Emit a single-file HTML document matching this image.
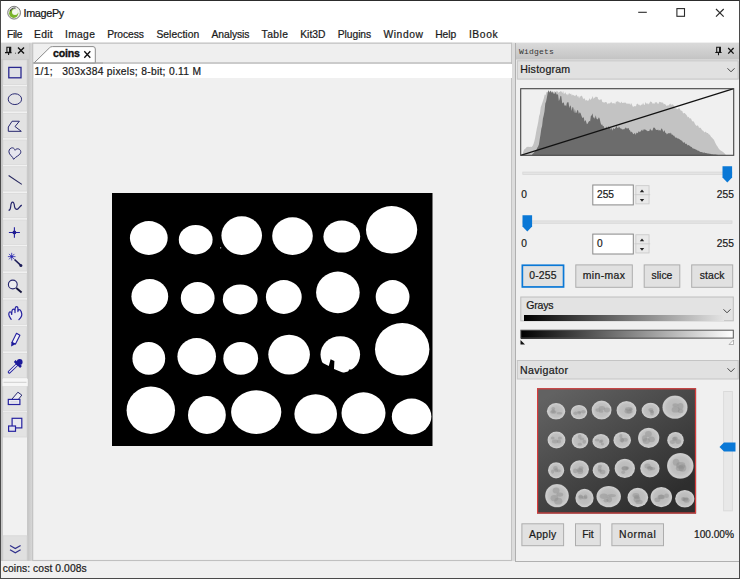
<!DOCTYPE html>
<html><head><meta charset="utf-8"><title>ImagePy</title>
<style>
html,body{margin:0;padding:0;}
body{width:740px;height:579px;position:relative;overflow:hidden;background:#f0f0f0;font-family:"Liberation Sans",sans-serif;font-size:10.3px;color:#1a1a1a;}
.abs{position:absolute;}
.t{position:absolute;white-space:nowrap;line-height:12px;height:12px;-webkit-text-stroke:0.22px #1a1a1a;}
#win{position:absolute;left:0;top:0;width:740px;height:579px;box-sizing:border-box;border:1px solid #4a4a4a;border-top-color:#2c2c2c;border-right-width:1.5px;border-bottom-width:1.5px;z-index:50;pointer-events:none;}
#title{position:absolute;left:1px;top:1px;width:738px;height:41px;background:#fff;}
.menu{font-size:10.3px;top:28.7px;color:#1a1a1a;}
.btn{position:absolute;box-sizing:border-box;background:#e1e1e1;border:1px solid #adadad;text-align:center;font-size:10.3px;}
.tb{position:absolute;left:3px;width:24px;height:24px;background:#e4e4e4;border:1px solid #dadada;box-sizing:border-box;}
.tb svg{position:absolute;left:0;top:0;}
.hdr{position:absolute;box-sizing:border-box;left:516px;width:222.5px;background:#e1e1e1;border:1px solid #c4c4c4;}
.spin{position:absolute;box-sizing:border-box;background:#fff;border:1px solid #7a7a7a;}
.sb{position:absolute;box-sizing:border-box;background:#e8e8e8;border:1px solid #c0c0c0;}
</style></head>
<body>
<div id="title"></div>
<svg class="abs" style="left:6px;top:4px" width="18" height="18" viewBox="6 4 18 18">
<circle cx="14.100" cy="12.700" r="6.400" fill="#e6e8e2" stroke="#707070" stroke-width="0.900"/>
<circle cx="14.100" cy="12.700" r="5" fill="#fbfbfb"/>
<circle cx="13.700" cy="13.300" r="4.600" fill="#7ab42a"/>
<circle cx="15" cy="12" r="3" fill="#f4f7ee"/>
<path d="M10 11.200 A4.600 4.600 0 0 1 15.600 8.300" fill="none" stroke="#444" stroke-width="1.100"/>
</svg>
<div class="t" style="left:23.5px;top:7px;font-size:10.8px;color:#111;letter-spacing:-0.318px">ImagePy</div>
<svg class="abs" style="left:630px;top:0px" width="109" height="24" viewBox="630 0 109 24">
<path d="M638.200 12.300 H646.800" stroke="#2a2a2a" stroke-width="1.100" fill="none"/>
<rect x="676.900" y="8.600" width="7.600" height="7.700" stroke="#2a2a2a" stroke-width="1.100" fill="none"/>
<path d="M716 9 L723.700 16.700 M723.700 9 L716 16.700" stroke="#2a2a2a" stroke-width="1.150" fill="none"/>
</svg>
<div class="t menu" style="left:7px;letter-spacing:-0.365px">File</div>
<div class="t menu" style="left:34.1px;letter-spacing:0.283px">Edit</div>
<div class="t menu" style="left:65px;letter-spacing:0.319px">Image</div>
<div class="t menu" style="left:107.2px;letter-spacing:-0.067px">Process</div>
<div class="t menu" style="left:156.4px;letter-spacing:0.055px">Selection</div>
<div class="t menu" style="left:211.5px;letter-spacing:-0.049px">Analysis</div>
<div class="t menu" style="left:261.6px;letter-spacing:0.419px">Table</div>
<div class="t menu" style="left:300.2px;letter-spacing:0.028px">Kit3D</div>
<div class="t menu" style="left:337.8px;letter-spacing:-0.064px">Plugins</div>
<div class="t menu" style="left:383.5px;letter-spacing:0.555px">Window</div>
<div class="t menu" style="left:435.2px;letter-spacing:-0.029px">Help</div>
<div class="t menu" style="left:468.9px;letter-spacing:0.614px">IBook</div>
<div class="abs" style="left:1px;top:43px;width:28.500px;height:518px;background:#c8c8c8;"></div>
<div class="abs" style="left:1px;top:43px;width:28px;height:16px;background:linear-gradient(#d8d8d8,#d0d0d0);"></div>
<div class="abs" style="left:3px;top:59.500px;width:24px;height:500.500px;background:#f1f1f1;"></div>
<div class="abs" style="left:29px;top:43px;width:4px;height:518px;background:linear-gradient(90deg,#cbcbcb,#dadada);"></div>
<svg class="abs" style="left:1px;top:43px" width="28" height="16" viewBox="0 0 28 16">
<path d="M5.900 4.300 H9.700 V9.300 H5.900 Z M4 9.600 H10.600 M7.600 9.600 V12" stroke="#111" stroke-width="1.100" fill="none"/>
<rect x="8" y="4.300" width="1.700" height="5" fill="#111"/>
<rect x="14" y="9.700" width="1" height="1" fill="#555"/>
<path d="M17 4.600 L23 10.600 M23 4.600 L17 10.600" stroke="#111" stroke-width="1.400" fill="none"/>
</svg>
<svg class="abs" style="left:0px;top:43px" width="34" height="519" viewBox="0 43 34 519"><rect x="3.2" y="60.10" width="23.5" height="24.3" fill="#e3e3e3" stroke="#d9d9d9" stroke-width="0.8"/><g transform="translate(2.9,60.30)"><rect x="5.900" y="7.100" width="12.200" height="10.400" fill="#dfe1e6" stroke="#2a2890" stroke-width="1.300"/></g><rect x="3.2" y="86.76" width="23.5" height="24.3" fill="#e3e3e3" stroke="#d9d9d9" stroke-width="0.8"/><g transform="translate(2.9,86.96)"><ellipse cx="12" cy="12.200" rx="6.700" ry="5.400" fill="#e4e4e6" stroke="#2c2c74" stroke-width="1"/></g><rect x="3.2" y="113.42" width="23.5" height="24.3" fill="#e3e3e3" stroke="#d9d9d9" stroke-width="0.8"/><g transform="translate(2.9,113.62)"><path d="M9.200 7.600 L16.500 7.600 L12.100 12.900 L18.400 17.700 L5.400 17.700 L5.400 13.400 Z" fill="#e3e3ea" stroke="#26266e" stroke-width="1" stroke-linejoin="round"/></g><rect x="3.2" y="140.08" width="23.5" height="24.3" fill="#e3e3e3" stroke="#d9d9d9" stroke-width="0.8"/><g transform="translate(2.9,140.28)"><path d="M10.700 19 C10.200 16.500 6 14.500 6 11.500 C6 8.800 8 7.300 9.800 7.600 C11.200 7.900 11.800 9 12.200 10 C13 8.900 14 8.300 15.400 8.600 C17.300 9 18.200 10.800 17.800 12.500 C17.300 14.800 12.500 16.500 10.700 19 Z" fill="#e6e6ee" stroke="#26266e" stroke-width="1" stroke-linejoin="round"/></g><rect x="3.2" y="166.74" width="23.5" height="24.3" fill="#e3e3e3" stroke="#d9d9d9" stroke-width="0.8"/><g transform="translate(2.9,166.94)"><path d="M5.700 8.500 L18.900 17.400" stroke="#26265e" stroke-width="1.100" fill="none"/></g><rect x="3.2" y="193.40" width="23.5" height="24.3" fill="#e3e3e3" stroke="#d9d9d9" stroke-width="0.8"/><g transform="translate(2.9,193.60)"><path d="M5.700 16.800 C7.500 16.800 7.600 15 7.800 12.900 C8 10.500 8.300 8.600 9.700 8.600 C11.200 8.600 11.400 10.800 11.600 12.900 C11.900 14.800 12.800 15.800 14.100 15.800 C15.600 15.800 17 12.300 18.900 11.500" stroke="#22226a" stroke-width="1.200" fill="none"/></g><rect x="3.2" y="220.06" width="23.5" height="24.3" fill="#e3e3e3" stroke="#d9d9d9" stroke-width="0.8"/><g transform="translate(2.9,220.26)"><path d="M11.500 6.900 V17.500 M6 12.200 H17 " stroke="#2420a0" stroke-width="1.100" fill="none"/><circle cx="11.500" cy="12.200" r="1.900" fill="#201c90"/></g><rect x="3.2" y="246.72" width="23.5" height="24.3" fill="#e3e3e3" stroke="#d9d9d9" stroke-width="0.8"/><g transform="translate(2.9,246.92)"><path d="M11.600 12.600 L17.900 18.400" stroke="#1c1c58" stroke-width="1.600" fill="none"/><circle cx="18" cy="18.500" r="1.500" fill="#1c1c58"/><path d="M8.800 5.900 V13.500 M5 9.700 H12.600 M6.100 7 L11.500 12.400 M11.500 7 L6.100 12.400" stroke="#2a28b0" stroke-width="0.800" fill="none"/><circle cx="8.800" cy="9.700" r="1.100" fill="#2a28b0"/></g><rect x="3.2" y="273.38" width="23.5" height="24.3" fill="#e3e3e3" stroke="#d9d9d9" stroke-width="0.8"/><g transform="translate(2.9,273.58)"><circle cx="9.900" cy="10.900" r="4.400" fill="#ececf0" stroke="#26266e" stroke-width="1.100"/><path d="M13.400 14.500 L18.700 19" stroke="#14143c" stroke-width="1.900" fill="none"/></g><rect x="3.2" y="300.04" width="23.5" height="24.3" fill="#e3e3e3" stroke="#d9d9d9" stroke-width="0.8"/><g transform="translate(2.9,300.24)"><path d="M8.300 19.100 C7 17 5.900 15.800 5.900 14.200 C5.900 12.500 6.300 11.600 7.300 11.500 C8.300 11.500 8.600 13 8.800 14.200 C8.800 12.500 8.800 9.900 9.800 9.200 C10.700 8.600 12 9.200 12.100 10.400 L12.100 12.300 C12.100 10 12 7.500 12.800 6.800 C13.800 6 15 6.800 15 8 L15 11.300 C15 10.300 15.300 9.400 16.200 9.300 C17.400 9.200 18 10.200 18.200 11.300 C18.600 12.500 18.900 13.200 18.900 14.200 C18.900 15.500 18.500 16.300 17.900 17.100 C17.300 18 16.600 18.600 16 19.300" fill="#e9e9f1" stroke="#2622a0" stroke-width="1.200" stroke-linejoin="round" stroke-linecap="round"/></g><rect x="3.2" y="326.70" width="23.5" height="24.3" fill="#e3e3e3" stroke="#d9d9d9" stroke-width="0.8"/><g transform="translate(2.9,326.90)"><path d="M13.600 6.300 L17 8.300 L12.600 17.200 L9 15.500 Z" fill="#f2f2f8" stroke="#2420a0" stroke-width="1.100" stroke-linejoin="round"/><path d="M8.600 15 L12.900 17.200 L8.200 19.600 Z" fill="#1c1a9a"/></g><rect x="3.2" y="353.36" width="23.5" height="24.3" fill="#e3e3e3" stroke="#d9d9d9" stroke-width="0.8"/><g transform="translate(2.9,353.56)"><path d="M6.300 18.500 L14 11.200" stroke="#2420a0" stroke-width="3" stroke-linecap="round" fill="none"/><path d="M6.500 18.300 L14 11.200" stroke="#f6f6fa" stroke-width="1.300" stroke-linecap="round" fill="none"/><path d="M11.800 7.500 L18.100 13.400" stroke="#1c1a9a" stroke-width="2.600" fill="none"/><circle cx="16.800" cy="8.400" r="2.900" fill="#1c1a9a"/><path d="M13.400 11 L15.600 9" stroke="#1c1a9a" stroke-width="3" fill="none"/></g><rect x="3.2" y="386.50" width="23.5" height="24.3" fill="#e3e3e3" stroke="#d9d9d9" stroke-width="0.8"/><g transform="translate(2.9,386.70)"><path d="M8.800 12.700 L15 5.500 L18.900 8.400 L15.500 12.700" fill="#ececf2" stroke="#26266e" stroke-width="1" stroke-linejoin="round"/><rect x="5.400" y="12.700" width="11.600" height="5.100" fill="#ececf2" stroke="#2622a0" stroke-width="1.200"/><path d="M7.500 15.200 H15" stroke="#c8c8e0" stroke-width="0.800"/></g><rect x="3.2" y="412.70" width="23.5" height="24.3" fill="#e3e3e3" stroke="#d9d9d9" stroke-width="0.8"/><g transform="translate(2.9,412.90)"><rect x="9.200" y="5.400" width="9.700" height="9.600" fill="#e9e9ef" stroke="#2622a0" stroke-width="1.200"/><rect x="5.700" y="13.100" width="6.900" height="5.300" fill="#e4e4f0" stroke="#2622a0" stroke-width="1.200"/></g><rect x="2.500" y="378.700" width="25.300" height="7.500" fill="#f6f6f6"/><path d="M3.500 382.300 H26.500" stroke="#cfcfcf" stroke-width="1" fill="none"/><rect x="3.200" y="535.800" width="23.700" height="24.400" fill="#e0e0e0" stroke="#d6d6d6" stroke-width="0.800"/><path d="M10 545.500 L15.300 548.500 L20.600 545.500 M10 549.800 L15.300 552.800 L20.600 549.800" stroke="#30308c" stroke-width="1.250" fill="none"/></svg>
<div class="abs" style="left:33px;top:43px;width:479px;height:518px;background:#f0f0f0;"></div>
<div class="abs" style="left:33px;top:43px;width:479px;height:20px;background:#efefef;"></div>
<svg class="abs" style="left:30px;top:40px" width="486" height="524" viewBox="30 40 486 524"><rect x="32.700" y="43.200" width="478.900" height="517.300" fill="none" stroke="#c0c0c0" stroke-width="1.100"/><path d="M33 63 H511.500" stroke="#a6a6a6" stroke-width="1" fill="none"/></svg>
<svg class="abs" style="left:33px;top:43px" width="70" height="21" viewBox="0 0 70 21">
<path d="M1 20 L16.500 4.800 Q17.500 3.600 19.500 3.600 L60 3.600 Q62.300 3.600 62.300 6 L62.300 20 Z" fill="#fff" stroke="#8a8a8a" stroke-width="1"/>
<path d="M0 20 H70" stroke="#a6a6a6" stroke-width="1" fill="none"/>
<path d="M51.300 8.200 L57.300 14.800 M57.300 8.200 L51.300 14.800" stroke="#111" stroke-width="1.300" fill="none"/>
</svg>
<div class="t" style="left:53px;top:47px;font-size:10.6px;font-weight:bold;color:#111;-webkit-text-stroke:0.350px #111;letter-spacing:-0.168px">coins</div>
<div class="abs" style="left:34px;top:63.500px;width:477.5px;height:14.500px;background:#fff;"></div>
<div class="t" style="left:34.500px;top:65.500px;font-size:10.3px;white-space:pre;letter-spacing:0.282px">1/1;   303x384 pixels; 8-bit; 0.11 M</div>
<svg class="abs" style="left:112px;top:193px" width="320.5" height="253" viewBox="112 193 320.5 253"><rect x="112" y="193" width="320.5" height="253" fill="#000"/><ellipse cx="148.8" cy="238.0" rx="18.9" ry="16.9" fill="#fff"/><ellipse cx="195.7" cy="239.7" rx="16.9" ry="14.7" fill="#fff"/><ellipse cx="241.7" cy="235.6" rx="20.3" ry="19.3" fill="#fff"/><ellipse cx="292.5" cy="236.1" rx="20.3" ry="18.9" fill="#fff"/><ellipse cx="341.8" cy="236.6" rx="18.4" ry="16.0" fill="#fff"/><ellipse cx="391.6" cy="229.8" rx="25.6" ry="23.7" fill="#fff"/><ellipse cx="149.8" cy="296.5" rx="18.4" ry="17.4" fill="#fff"/><ellipse cx="197.7" cy="298.0" rx="16.9" ry="16.0" fill="#fff"/><ellipse cx="240.2" cy="299.4" rx="17.4" ry="15.0" fill="#fff"/><ellipse cx="283.8" cy="297.0" rx="17.9" ry="16.9" fill="#fff"/><ellipse cx="337.9" cy="292.4" rx="21.8" ry="20.8" fill="#fff"/><ellipse cx="392.6" cy="297.0" rx="16.9" ry="16.9" fill="#fff"/><ellipse cx="148.8" cy="358.4" rx="16.4" ry="16.4" fill="#fff"/><ellipse cx="196.7" cy="356.5" rx="19.3" ry="18.4" fill="#fff"/><ellipse cx="240.7" cy="358.4" rx="17.4" ry="16.4" fill="#fff"/><ellipse cx="289.1" cy="354.6" rx="20.8" ry="19.8" fill="#fff"/><ellipse cx="340.3" cy="354.6" rx="19.8" ry="18.4" fill="#fff"/><ellipse cx="402.2" cy="349.2" rx="27.2" ry="26.3" fill="#fff"/><ellipse cx="150.8" cy="410.2" rx="24.2" ry="23.7" fill="#fff"/><ellipse cx="206.9" cy="415.0" rx="18.9" ry="18.9" fill="#fff"/><ellipse cx="256.2" cy="412.1" rx="25.1" ry="21.8" fill="#fff"/><ellipse cx="315.7" cy="414.0" rx="21.3" ry="19.8" fill="#fff"/><ellipse cx="363.5" cy="413.1" rx="22.0" ry="20.8" fill="#fff"/><ellipse cx="411.6" cy="416.5" rx="19.8" ry="17.9" fill="#fff"/><polygon points="319.8,361.5 328.8,366.0 330.6,359.3 334.4,361.1 334.0,368.9 347.4,374.6 349.0,369.4 357.1,369.8 359.3,376.6 319.8,376.6" fill="#000"/><circle cx="220.700" cy="247.800" r="0.600" fill="#fff"/></svg>
<div class="abs" style="left:512px;top:43px;width:3px;height:518px;background:#dcdcdc;"></div>
<div class="abs" style="left:515px;top:43px;width:224px;height:518.500px;box-sizing:border-box;border:1px solid #b0b0b0;border-top:none;border-right:none;background:#f0f0f0;"></div>
<div class="abs" style="left:516px;top:43px;width:223px;height:16px;background:linear-gradient(#dadada,#c4c4c4);"></div>
<div class="abs" style="left:516px;top:59px;width:223px;height:1px;background:#d6d6d6;"></div>
<div class="t" style="left:519px;top:45.600px;font-family:'Liberation Mono',monospace;font-size:8px;color:#333;letter-spacing:0.200px;-webkit-text-stroke:0">Widgets</div>
<svg class="abs" style="left:710px;top:43px" width="28" height="16" viewBox="0 0 28 16">
<path d="M6.700 4.200 H10.400 V9.200 H6.700 Z M5.300 9.400 H11.600 M8.500 9.400 V12.300" stroke="#151515" stroke-width="1.050" fill="none"/>
<rect x="9" y="4.200" width="1.600" height="5" fill="#151515"/>
<path d="M18.200 5 L23.600 10.600 M23.600 5 L18.200 10.600" stroke="#111" stroke-width="1.300" fill="none"/>
</svg>
<svg class="abs" style="left:514px;top:58px" width="227" height="24" viewBox="514 58 227 24"><rect x="517.30" y="60.80" width="220.90" height="18.30" fill="#e1e1e1" stroke="#c4c4c4" stroke-width="1"/></svg>
<div class="t" style="left:520.200px;top:63.300px;font-size:10.6px;;letter-spacing:0.215px">Histogram</div>
<svg class="abs" style="left:725px;top:64px" width="12" height="12" viewBox="0 0 12 12"><path d="M2.500 4.300 L6 7.800 L9.500 4.300" stroke="#444" stroke-width="1" fill="none"/></svg>
<svg class="abs" style="left:516px;top:84px" width="222" height="76" viewBox="516 84 222 76"><rect x="520.7" y="88.7" width="213" height="66.6" fill="#f0f0f0"/><polygon points="522.3,155.3 523.1,152.3 523.9,149.9 524.7,149.0 525.5,148.4 526.3,147.4 527.1,146.8 527.9,146.9 528.7,146.7 529.5,146.9 530.3,146.7 531.1,146.9 531.9,146.7 532.7,145.8 533.5,144.0 534.3,141.4 535.1,137.9 535.9,133.4 536.7,128.9 537.5,125.4 538.3,121.6 539.1,115.9 539.9,113.8 540.7,107.2 541.5,105.3 542.3,103.1 543.1,100.6 543.9,97.9 544.7,94.5 545.5,95.2 546.3,92.6 547.1,91.6 547.9,92.2 548.7,91.3 549.5,93.0 550.3,92.8 551.1,92.3 551.9,90.5 552.7,91.6 553.5,92.1 554.3,91.2 555.1,91.8 555.9,92.5 556.7,90.7 557.5,91.2 558.3,93.0 559.1,91.8 559.9,92.1 560.7,90.9 561.5,91.6 562.3,93.3 563.1,90.8 563.9,94.3 564.7,93.3 565.5,92.3 566.3,94.7 567.1,93.7 567.9,95.5 568.7,93.4 569.5,93.3 570.3,94.2 571.1,93.4 571.9,95.7 572.7,94.6 573.5,95.2 574.3,95.5 575.1,96.2 575.9,95.1 576.7,94.8 577.5,96.7 578.3,96.1 579.1,98.4 579.9,96.3 580.7,96.6 581.5,95.5 582.3,96.4 583.1,98.7 583.9,98.7 584.7,98.2 585.5,100.7 586.3,99.7 587.1,100.7 587.9,100.6 588.7,100.6 589.5,98.0 590.3,99.9 591.1,99.1 591.9,98.2 592.7,96.1 593.5,98.9 594.3,97.7 595.1,97.5 595.9,96.5 596.7,96.9 597.5,96.9 598.3,99.4 599.1,99.6 599.9,100.3 600.7,99.2 601.5,99.2 602.3,102.1 603.1,102.3 603.9,102.4 604.7,102.6 605.5,102.1 606.3,102.0 607.1,103.3 607.9,104.2 608.7,103.1 609.5,103.4 610.3,102.9 611.1,101.8 611.9,102.8 612.7,103.5 613.5,103.2 614.3,102.8 615.1,104.5 615.9,101.7 616.7,101.8 617.5,101.3 618.3,101.4 619.1,102.5 619.9,102.3 620.7,103.2 621.5,101.4 622.3,103.1 623.1,103.0 623.9,102.5 624.7,102.8 625.5,102.4 626.3,103.4 627.1,103.8 627.9,103.4 628.7,103.8 629.5,103.5 630.3,105.1 631.1,103.1 631.9,104.5 632.7,106.5 633.5,106.7 634.3,106.2 635.1,105.9 635.9,106.5 636.7,104.1 637.5,103.4 638.3,104.8 639.1,104.6 639.9,105.6 640.7,105.4 641.5,104.6 642.3,104.7 643.1,102.8 643.9,104.8 644.7,105.1 645.5,102.0 646.3,103.2 647.1,104.3 647.9,103.0 648.7,104.6 649.5,103.0 650.3,101.5 651.1,101.8 651.9,102.3 652.7,103.7 653.5,103.3 654.3,103.9 655.1,102.0 655.9,102.8 656.7,102.1 657.5,103.6 658.3,104.0 659.1,102.2 659.9,101.7 660.7,102.2 661.5,102.5 662.3,102.5 663.1,102.8 663.9,104.6 664.7,103.8 665.5,104.5 666.3,105.7 667.1,105.8 667.9,105.2 668.7,105.4 669.5,104.3 670.3,103.6 671.1,105.3 671.9,104.3 672.7,104.5 673.5,105.0 674.3,107.2 675.1,108.0 675.9,108.4 676.7,108.8 677.5,109.2 678.3,108.4 679.1,108.1 679.9,109.0 680.7,110.6 681.5,110.8 682.3,111.1 683.1,113.6 683.9,112.9 684.7,112.9 685.5,114.0 686.3,114.8 687.1,116.1 687.9,117.5 688.7,116.8 689.5,118.5 690.3,118.3 691.1,118.7 691.9,120.7 692.7,121.5 693.5,121.2 694.3,122.5 695.1,124.3 695.9,125.2 696.7,125.9 697.5,125.2 698.3,126.1 699.1,127.9 699.9,127.5 700.7,128.0 701.5,129.2 702.3,130.4 703.1,130.6 703.9,131.7 704.7,132.4 705.5,131.5 706.3,132.5 707.1,133.1 707.9,133.1 708.7,134.3 709.5,134.5 710.3,135.4 711.1,136.9 711.9,137.6 712.7,138.4 713.5,139.3 714.3,140.6 715.1,142.5 715.9,144.0 716.7,145.6 717.5,146.4 718.3,147.9 719.1,149.0 719.9,150.0 720.7,150.4 721.5,151.1 722.3,151.5 723.1,152.1 723.9,152.7 724.7,153.4 725.5,154.4 725.9,155.3" fill="#c3c3c3"/><polygon points="531.7,155.3 532.5,154.0 533.3,153.2 534.1,152.5 534.9,151.3 535.7,150.8 536.5,149.7 537.3,147.8 538.1,146.4 538.9,144.5 539.7,139.4 540.5,134.5 541.3,128.7 542.1,126.1 542.9,118.8 543.7,115.5 544.5,111.2 545.3,103.6 546.1,101.4 546.9,97.4 547.7,92.9 548.5,89.9 549.3,92.8 550.1,90.5 550.9,91.6 551.7,92.7 552.5,91.7 553.3,93.8 554.1,93.1 554.9,94.2 555.7,91.4 556.5,94.5 557.3,94.2 558.1,94.8 558.9,101.2 559.7,99.0 560.5,95.7 561.3,96.3 562.1,102.5 562.9,103.6 563.7,102.1 564.5,105.8 565.3,105.0 566.1,106.6 566.9,102.7 567.7,102.3 568.5,102.3 569.3,108.3 570.1,105.3 570.9,106.5 571.7,110.9 572.5,107.1 573.3,107.6 574.1,113.2 574.9,109.1 575.7,112.9 576.5,112.7 577.3,110.0 578.1,110.4 578.9,113.9 579.7,112.2 580.5,113.0 581.3,115.3 582.1,117.4 582.9,117.9 583.7,116.9 584.5,121.7 585.3,120.1 586.1,121.4 586.9,124.2 587.7,123.5 588.5,121.9 589.3,120.8 590.1,121.6 590.9,115.7 591.7,115.5 592.5,113.3 593.3,117.8 594.1,117.3 594.9,118.9 595.7,115.3 596.5,118.4 597.3,119.5 598.1,118.8 598.9,117.3 599.7,118.8 600.5,122.5 601.3,125.1 602.1,124.2 602.9,126.2 603.7,125.9 604.5,128.5 605.3,128.8 606.1,126.5 606.9,127.7 607.7,129.2 608.5,125.9 609.3,127.2 610.1,126.7 610.9,129.9 611.7,127.4 612.5,130.7 613.3,128.1 614.1,129.0 614.9,128.8 615.7,127.4 616.5,125.4 617.3,127.8 618.1,128.2 618.9,126.4 619.7,127.5 620.5,128.4 621.3,128.6 622.1,129.4 622.9,129.2 623.7,129.2 624.5,129.3 625.3,127.3 626.1,128.8 626.9,127.7 627.7,128.7 628.5,127.8 629.3,129.9 630.1,130.4 630.9,132.6 631.7,131.6 632.5,132.8 633.3,134.3 634.1,133.8 634.9,132.8 635.7,135.0 636.5,132.4 637.3,133.2 638.1,132.6 638.9,131.1 639.7,132.2 640.5,131.5 641.3,130.6 642.1,129.4 642.9,131.3 643.7,129.3 644.5,129.5 645.3,129.6 646.1,130.3 646.9,130.4 647.7,131.3 648.5,130.9 649.3,131.0 650.1,128.5 650.9,130.1 651.7,130.4 652.5,130.6 653.3,127.7 654.1,127.5 654.9,128.1 655.7,129.6 656.5,129.9 657.3,129.9 658.1,129.5 658.9,130.8 659.7,130.0 660.5,130.8 661.3,128.5 662.1,128.8 662.9,130.7 663.7,132.1 664.5,130.1 665.3,132.7 666.1,132.9 666.9,134.4 667.7,133.6 668.5,133.3 669.3,133.0 670.1,133.8 670.9,132.6 671.7,134.7 672.5,134.5 673.3,135.7 674.1,135.4 674.9,137.1 675.7,137.7 676.5,137.6 677.3,138.5 678.1,138.3 678.9,139.1 679.7,139.3 680.5,140.1 681.3,140.5 682.1,140.7 682.9,142.2 683.7,142.8 684.5,142.1 685.3,144.0 686.1,143.6 686.9,144.2 687.7,145.6 688.5,145.0 689.3,145.4 690.1,146.3 690.9,146.7 691.7,147.1 692.5,148.3 693.3,148.4 694.1,148.8 694.9,148.9 695.7,149.4 696.5,149.8 697.3,150.4 698.1,150.6 698.9,151.1 699.7,151.4 700.5,151.9 701.3,152.1 702.1,152.3 702.9,152.4 703.7,152.7 704.5,152.6 705.3,152.9 706.1,153.0 706.9,153.2 707.7,153.4 708.5,153.6 709.3,153.8 710.1,153.8 710.9,154.0 711.7,154.2 712.5,154.3 713.3,154.4 714.1,154.5 714.9,154.5 715.7,154.6 716.5,154.7 717.3,154.8 718.1,155.3" fill="#6c6c6c"/><path d="M520.7 155.3 L733.7 88.7" stroke="#111" stroke-width="1.250" fill="none"/><rect x="520.7" y="88.7" width="213" height="66.6" fill="none" stroke="#444" stroke-width="1.100"/></svg>
<svg class="abs" style="left:520px;top:169px" width="215" height="8" viewBox="520 169 215 8"><rect x="522.80" y="172.10" width="209.20" height="2.40" fill="#e4e4e4" stroke="#d8d8d8" stroke-width="0.8"/></svg>
<svg class="abs" style="left:722px;top:165.7px" width="11" height="18" viewBox="0 0 11 18"><path d="M0.500 0.200 H10.100 V11.500 L5.300 16.500 L0.500 11.500 Z" fill="#0a78d6"/></svg>
<svg class="abs" style="left:520px;top:218px" width="215" height="8" viewBox="520 218 215 8"><rect x="522.80" y="220.90" width="209.20" height="2.40" fill="#e4e4e4" stroke="#d8d8d8" stroke-width="0.8"/></svg>
<svg class="abs" style="left:522.3px;top:215.2px" width="11" height="18" viewBox="0 0 11 18"><path d="M0.500 0.200 H10.100 V11.500 L5.300 16.500 L0.500 11.500 Z" fill="#0a78d6"/></svg>
<div class="t" style="left:521.300px;top:189.0px;font-size:10.2px">0</div>
<div class="t" style="left:716.800px;top:189.0px;font-size:10.2px">255</div>
<svg class="abs" style="left:590px;top:182px" width="46" height="26" viewBox="590 182 46 26"><rect x="592.80" y="185.00" width="40.50" height="19.90" fill="#fff" stroke="#888" stroke-width="1"/></svg>
<div class="t" style="left:597px;top:189.0px;font-size:10.200px">255</div>
<svg class="abs" style="left:633px;top:183px" width="19" height="24" viewBox="633 183 19 24"><rect x="635.85" y="185.65" width="13.20" height="18.20" fill="#e9e9e9" stroke="#cbcbcb" stroke-width="0.9"/><path d="M634.500 194.70 H650.200" stroke="#cdcdcd" stroke-width="1" fill="none"/></svg>
<svg class="abs" style="left:635.400px;top:184.5px" width="14" height="21" viewBox="0 0 14 21"><path d="M4.800 7.300 L7 4.600 L9.200 7.300 Z M4.800 14 L7 16.700 L9.200 14 Z" fill="#222"/></svg>
<div class="t" style="left:521.300px;top:238.1px;font-size:10.2px">0</div>
<div class="t" style="left:716.800px;top:238.1px;font-size:10.2px">255</div>
<svg class="abs" style="left:590px;top:231px" width="46" height="26" viewBox="590 231 46 26"><rect x="592.80" y="234.10" width="40.50" height="19.90" fill="#fff" stroke="#888" stroke-width="1"/></svg>
<div class="t" style="left:597px;top:238.1px;font-size:10.200px">0</div>
<svg class="abs" style="left:633px;top:232px" width="19" height="24" viewBox="633 232 19 24"><rect x="635.85" y="234.75" width="13.20" height="18.20" fill="#e9e9e9" stroke="#cbcbcb" stroke-width="0.9"/><path d="M634.500 243.80 H650.200" stroke="#cdcdcd" stroke-width="1" fill="none"/></svg>
<svg class="abs" style="left:635.400px;top:233.6px" width="14" height="21" viewBox="0 0 14 21"><path d="M4.800 7.300 L7 4.600 L9.200 7.300 Z M4.800 14 L7 16.700 L9.200 14 Z" fill="#222"/></svg>
<svg class="abs" style="left:519px;top:262px" width="48" height="28" viewBox="519 262 48 28"><rect x="522.35" y="265.25" width="41.20" height="21.70" fill="#e1e1e1" stroke="#0a78d6" stroke-width="1.7"/></svg>
<div class="t" style="left:521.5px;width:42.9px;top:269.9px;text-align:center;font-size:10.4px;letter-spacing:0.180px">0-255</div>
<svg class="abs" style="left:573px;top:262px" width="62" height="28" viewBox="573 262 62 28"><rect x="575.80" y="264.90" width="56.50" height="22.40" fill="#e1e1e1" stroke="#adadad" stroke-width="1"/></svg>
<div class="t" style="left:575.3px;width:57.5px;top:269.9px;text-align:center;font-size:10.4px;letter-spacing:0.359px">min-max</div>
<svg class="abs" style="left:641px;top:262px" width="42" height="28" viewBox="641 262 42 28"><rect x="644.20" y="264.90" width="35.60" height="22.40" fill="#e1e1e1" stroke="#adadad" stroke-width="1"/></svg>
<div class="t" style="left:643.7px;width:36.6px;top:269.9px;text-align:center;font-size:10.4px;letter-spacing:0.001px">slice</div>
<svg class="abs" style="left:689px;top:262px" width="47" height="28" viewBox="689 262 47 28"><rect x="691.70" y="264.90" width="41.00" height="22.40" fill="#e1e1e1" stroke="#adadad" stroke-width="1"/></svg>
<div class="t" style="left:691.2px;width:42.0px;top:269.9px;text-align:center;font-size:10.4px;letter-spacing:0.159px">stack</div>
<svg class="abs" style="left:518px;top:294px" width="218" height="30" viewBox="518 294 218 30"><rect x="520.80" y="297.00" width="212.50" height="23.80" fill="#e3e3e3" stroke="#bdbdbd" stroke-width="1"/></svg>
<div class="t" style="left:526.300px;top:299.400px;font-size:10.500px;letter-spacing:-0.179px">Grays</div>
<div class="abs" style="left:524px;top:314.500px;width:200px;height:6.400px;background:linear-gradient(90deg,#000,#e3e3e3);"></div>
<svg class="abs" style="left:720.500px;top:304.500px" width="12" height="12" viewBox="0 0 12 12"><path d="M2.500 4.300 L6 7.800 L9.500 4.300" stroke="#444" stroke-width="1" fill="none"/></svg>
<div class="abs" style="left:521px;top:330px;width:212px;height:8.500px;background:linear-gradient(90deg,#000,#fff);"></div>
<svg class="abs" style="left:518px;top:327px" width="218" height="14" viewBox="518 327 218 14"><rect x="520.80" y="330.20" width="212.50" height="7.90" fill="none" stroke="#555" stroke-width="1"/></svg>
<svg class="abs" style="left:519px;top:339px" width="218" height="8" viewBox="0 0 218 8"><path d="M1.500 1 L1.500 5.500 L6 5.500 Z" fill="#111"/><path d="M214.500 1 L214.500 5.500 L210 5.500 Z" fill="#fff" stroke="#888" stroke-width="0.600"/></svg>
<svg class="abs" style="left:514px;top:358px" width="227" height="24" viewBox="514 358 227 24"><rect x="517.30" y="360.50" width="220.90" height="18.50" fill="#e1e1e1" stroke="#c4c4c4" stroke-width="1"/></svg>
<div class="t" style="left:520px;top:363.800px;font-size:10.600px;;letter-spacing:0.332px">Navigator</div>
<svg class="abs" style="left:725px;top:364px" width="12" height="12" viewBox="0 0 12 12"><path d="M2.500 4.300 L6 7.800 L9.500 4.300" stroke="#444" stroke-width="1" fill="none"/></svg>
<svg class="abs" style="left:530px;top:384px" width="174" height="134" viewBox="530 384 174 134"><defs><linearGradient id="tbg" gradientUnits="userSpaceOnUse" x1="560" y1="388" x2="640" y2="514"><stop offset="0" stop-color="#626262"/><stop offset="0.500" stop-color="#484848"/><stop offset="1" stop-color="#2e2e2e"/></linearGradient><radialGradient id="cg" cx="0.500" cy="0.500" r="0.520"><stop offset="0" stop-color="#b8b8b8"/><stop offset="0.650" stop-color="#c0c0c0"/><stop offset="0.900" stop-color="#cecece"/><stop offset="1" stop-color="#a8a8a8"/></radialGradient></defs><rect x="537" y="388.2" width="159.1" height="125.4" fill="url(#tbg)"/><ellipse cx="556.1" cy="411.3" rx="9.2" ry="8.3" fill="url(#cg)"/><ellipse cx="553.3" cy="412.0" rx="3.1" ry="1.8" fill="#8a8a8a" opacity="0.400"/><ellipse cx="553.1" cy="411.1" rx="2.0" ry="1.9" fill="#8a8a8a" opacity="0.400"/><ellipse cx="553.3" cy="408.6" rx="1.8" ry="1.6" fill="#8a8a8a" opacity="0.400"/><ellipse cx="559.5" cy="413.3" rx="2.8" ry="1.3" fill="#8a8a8a" opacity="0.400"/><ellipse cx="579.0" cy="412.1" rx="8.3" ry="7.2" fill="url(#cg)"/><ellipse cx="583.4" cy="411.7" rx="2.4" ry="1.8" fill="#8a8a8a" opacity="0.400"/><ellipse cx="579.1" cy="412.2" rx="2.2" ry="1.1" fill="#8a8a8a" opacity="0.400"/><ellipse cx="579.5" cy="413.0" rx="1.5" ry="1.6" fill="#8a8a8a" opacity="0.400"/><ellipse cx="575.5" cy="413.3" rx="2.2" ry="1.8" fill="#8a8a8a" opacity="0.400"/><ellipse cx="601.6" cy="410.1" rx="10.0" ry="9.5" fill="url(#cg)"/><ellipse cx="597.9" cy="410.1" rx="2.6" ry="1.8" fill="#8a8a8a" opacity="0.400"/><ellipse cx="607.0" cy="410.0" rx="3.2" ry="2.4" fill="#8a8a8a" opacity="0.400"/><ellipse cx="601.1" cy="411.2" rx="2.3" ry="1.5" fill="#8a8a8a" opacity="0.400"/><ellipse cx="601.8" cy="408.0" rx="3.2" ry="2.0" fill="#8a8a8a" opacity="0.400"/><ellipse cx="626.5" cy="410.3" rx="10.0" ry="9.2" fill="url(#cg)"/><ellipse cx="630.9" cy="409.2" rx="1.8" ry="1.7" fill="#8a8a8a" opacity="0.400"/><ellipse cx="628.6" cy="409.0" rx="3.5" ry="1.9" fill="#8a8a8a" opacity="0.400"/><ellipse cx="629.5" cy="411.7" rx="3.1" ry="1.8" fill="#8a8a8a" opacity="0.400"/><ellipse cx="628.0" cy="411.2" rx="3.4" ry="2.4" fill="#8a8a8a" opacity="0.400"/><ellipse cx="650.6" cy="410.6" rx="9.0" ry="7.8" fill="url(#cg)"/><ellipse cx="651.5" cy="411.3" rx="1.8" ry="1.2" fill="#8a8a8a" opacity="0.400"/><ellipse cx="650.9" cy="409.8" rx="2.5" ry="1.7" fill="#8a8a8a" opacity="0.400"/><ellipse cx="652.0" cy="413.5" rx="1.8" ry="1.9" fill="#8a8a8a" opacity="0.400"/><ellipse cx="652.2" cy="411.8" rx="1.9" ry="1.5" fill="#8a8a8a" opacity="0.400"/><ellipse cx="675.0" cy="407.2" rx="12.6" ry="11.6" fill="url(#cg)"/><ellipse cx="680.5" cy="406.3" rx="2.9" ry="3.3" fill="#8a8a8a" opacity="0.400"/><ellipse cx="675.7" cy="409.7" rx="4.1" ry="2.9" fill="#8a8a8a" opacity="0.400"/><ellipse cx="680.6" cy="411.0" rx="2.7" ry="2.2" fill="#8a8a8a" opacity="0.400"/><ellipse cx="675.4" cy="405.2" rx="2.9" ry="1.9" fill="#8a8a8a" opacity="0.400"/><ellipse cx="556.5" cy="440.0" rx="9.0" ry="8.5" fill="url(#cg)"/><ellipse cx="559.0" cy="441.4" rx="2.0" ry="2.0" fill="#8a8a8a" opacity="0.400"/><ellipse cx="555.0" cy="441.5" rx="3.1" ry="1.9" fill="#8a8a8a" opacity="0.400"/><ellipse cx="552.7" cy="438.1" rx="1.9" ry="1.5" fill="#8a8a8a" opacity="0.400"/><ellipse cx="559.9" cy="437.9" rx="2.0" ry="1.5" fill="#8a8a8a" opacity="0.400"/><ellipse cx="580.0" cy="440.7" rx="8.3" ry="7.8" fill="url(#cg)"/><ellipse cx="579.7" cy="436.6" rx="1.8" ry="2.3" fill="#8a8a8a" opacity="0.400"/><ellipse cx="582.0" cy="438.9" rx="2.1" ry="1.3" fill="#8a8a8a" opacity="0.400"/><ellipse cx="584.3" cy="441.7" rx="1.8" ry="2.0" fill="#8a8a8a" opacity="0.400"/><ellipse cx="579.8" cy="444.2" rx="2.3" ry="1.5" fill="#8a8a8a" opacity="0.400"/><ellipse cx="600.9" cy="441.4" rx="8.5" ry="7.3" fill="url(#cg)"/><ellipse cx="602.4" cy="444.0" rx="1.6" ry="1.4" fill="#8a8a8a" opacity="0.400"/><ellipse cx="597.1" cy="440.1" rx="2.4" ry="1.4" fill="#8a8a8a" opacity="0.400"/><ellipse cx="601.7" cy="441.0" rx="1.6" ry="1.4" fill="#8a8a8a" opacity="0.400"/><ellipse cx="600.6" cy="441.5" rx="1.8" ry="1.5" fill="#8a8a8a" opacity="0.400"/><ellipse cx="622.2" cy="440.2" rx="8.8" ry="8.3" fill="url(#cg)"/><ellipse cx="621.6" cy="439.9" rx="2.1" ry="2.4" fill="#8a8a8a" opacity="0.400"/><ellipse cx="625.3" cy="439.8" rx="2.6" ry="2.0" fill="#8a8a8a" opacity="0.400"/><ellipse cx="622.3" cy="440.3" rx="1.6" ry="2.4" fill="#8a8a8a" opacity="0.400"/><ellipse cx="620.8" cy="436.0" rx="1.6" ry="2.0" fill="#8a8a8a" opacity="0.400"/><ellipse cx="648.7" cy="437.9" rx="10.7" ry="10.2" fill="url(#cg)"/><ellipse cx="644.5" cy="438.4" rx="2.5" ry="3.1" fill="#8a8a8a" opacity="0.400"/><ellipse cx="651.6" cy="439.3" rx="3.3" ry="2.9" fill="#8a8a8a" opacity="0.400"/><ellipse cx="648.4" cy="434.0" rx="3.4" ry="2.9" fill="#8a8a8a" opacity="0.400"/><ellipse cx="646.3" cy="441.0" rx="3.6" ry="2.9" fill="#8a8a8a" opacity="0.400"/><ellipse cx="675.5" cy="440.2" rx="8.3" ry="8.3" fill="url(#cg)"/><ellipse cx="672.4" cy="442.0" rx="2.7" ry="2.0" fill="#8a8a8a" opacity="0.400"/><ellipse cx="674.3" cy="439.0" rx="2.3" ry="2.0" fill="#8a8a8a" opacity="0.400"/><ellipse cx="678.1" cy="441.6" rx="2.9" ry="2.3" fill="#8a8a8a" opacity="0.400"/><ellipse cx="675.3" cy="438.4" rx="2.5" ry="2.0" fill="#8a8a8a" opacity="0.400"/><ellipse cx="556.1" cy="470.3" rx="8.1" ry="8.1" fill="url(#cg)"/><ellipse cx="552.6" cy="471.6" rx="1.6" ry="2.1" fill="#8a8a8a" opacity="0.400"/><ellipse cx="558.7" cy="470.8" rx="2.1" ry="1.5" fill="#8a8a8a" opacity="0.400"/><ellipse cx="555.4" cy="468.2" rx="2.3" ry="2.3" fill="#8a8a8a" opacity="0.400"/><ellipse cx="556.1" cy="470.3" rx="1.9" ry="2.0" fill="#8a8a8a" opacity="0.400"/><ellipse cx="579.5" cy="469.3" rx="9.5" ry="9.0" fill="url(#cg)"/><ellipse cx="579.8" cy="470.1" rx="3.2" ry="2.2" fill="#8a8a8a" opacity="0.400"/><ellipse cx="575.2" cy="470.9" rx="2.2" ry="2.3" fill="#8a8a8a" opacity="0.400"/><ellipse cx="580.2" cy="471.4" rx="3.0" ry="2.6" fill="#8a8a8a" opacity="0.400"/><ellipse cx="581.0" cy="468.0" rx="2.6" ry="1.8" fill="#8a8a8a" opacity="0.400"/><ellipse cx="601.1" cy="470.3" rx="8.5" ry="8.1" fill="url(#cg)"/><ellipse cx="602.6" cy="472.0" rx="2.8" ry="2.2" fill="#8a8a8a" opacity="0.400"/><ellipse cx="600.0" cy="466.2" rx="1.9" ry="1.4" fill="#8a8a8a" opacity="0.400"/><ellipse cx="599.9" cy="470.7" rx="1.8" ry="1.7" fill="#8a8a8a" opacity="0.400"/><ellipse cx="599.5" cy="468.7" rx="2.0" ry="2.2" fill="#8a8a8a" opacity="0.400"/><ellipse cx="624.8" cy="468.4" rx="10.2" ry="9.7" fill="url(#cg)"/><ellipse cx="627.3" cy="468.1" rx="2.0" ry="1.5" fill="#8a8a8a" opacity="0.400"/><ellipse cx="625.0" cy="468.2" rx="3.1" ry="2.3" fill="#8a8a8a" opacity="0.400"/><ellipse cx="623.2" cy="472.3" rx="1.9" ry="1.7" fill="#8a8a8a" opacity="0.400"/><ellipse cx="624.7" cy="468.4" rx="3.3" ry="1.8" fill="#8a8a8a" opacity="0.400"/><ellipse cx="649.9" cy="468.4" rx="9.7" ry="9.0" fill="url(#cg)"/><ellipse cx="650.1" cy="468.6" rx="2.8" ry="2.0" fill="#8a8a8a" opacity="0.400"/><ellipse cx="647.5" cy="466.0" rx="3.1" ry="2.6" fill="#8a8a8a" opacity="0.400"/><ellipse cx="649.5" cy="467.5" rx="2.5" ry="1.6" fill="#8a8a8a" opacity="0.400"/><ellipse cx="652.4" cy="468.6" rx="2.9" ry="1.6" fill="#8a8a8a" opacity="0.400"/><ellipse cx="680.3" cy="465.8" rx="13.3" ry="12.9" fill="url(#cg)"/><ellipse cx="679.9" cy="468.2" rx="4.0" ry="2.9" fill="#8a8a8a" opacity="0.400"/><ellipse cx="676.1" cy="462.3" rx="3.3" ry="3.5" fill="#8a8a8a" opacity="0.400"/><ellipse cx="680.8" cy="465.4" rx="4.5" ry="3.3" fill="#8a8a8a" opacity="0.400"/><ellipse cx="682.5" cy="468.1" rx="3.8" ry="3.7" fill="#8a8a8a" opacity="0.400"/><ellipse cx="557.0" cy="495.7" rx="11.9" ry="11.6" fill="url(#cg)"/><ellipse cx="554.4" cy="498.2" rx="3.9" ry="3.1" fill="#8a8a8a" opacity="0.400"/><ellipse cx="559.8" cy="494.6" rx="3.4" ry="2.1" fill="#8a8a8a" opacity="0.400"/><ellipse cx="556.1" cy="490.5" rx="3.4" ry="3.0" fill="#8a8a8a" opacity="0.400"/><ellipse cx="558.3" cy="501.2" rx="4.1" ry="3.4" fill="#8a8a8a" opacity="0.400"/><ellipse cx="584.5" cy="498.0" rx="9.2" ry="9.2" fill="url(#cg)"/><ellipse cx="580.6" cy="497.1" rx="2.2" ry="2.6" fill="#8a8a8a" opacity="0.400"/><ellipse cx="585.6" cy="496.6" rx="1.8" ry="2.0" fill="#8a8a8a" opacity="0.400"/><ellipse cx="580.8" cy="496.8" rx="2.4" ry="1.4" fill="#8a8a8a" opacity="0.400"/><ellipse cx="584.6" cy="497.7" rx="2.9" ry="1.6" fill="#8a8a8a" opacity="0.400"/><ellipse cx="608.7" cy="496.6" rx="12.3" ry="10.7" fill="url(#cg)"/><ellipse cx="606.0" cy="500.6" rx="2.5" ry="1.8" fill="#8a8a8a" opacity="0.400"/><ellipse cx="603.8" cy="496.2" rx="4.0" ry="2.7" fill="#8a8a8a" opacity="0.400"/><ellipse cx="611.8" cy="495.6" rx="4.2" ry="1.7" fill="#8a8a8a" opacity="0.400"/><ellipse cx="609.3" cy="499.6" rx="2.8" ry="2.8" fill="#8a8a8a" opacity="0.400"/><ellipse cx="637.8" cy="497.5" rx="10.4" ry="9.7" fill="url(#cg)"/><ellipse cx="635.9" cy="495.4" rx="3.4" ry="2.3" fill="#8a8a8a" opacity="0.400"/><ellipse cx="637.0" cy="499.4" rx="3.4" ry="2.8" fill="#8a8a8a" opacity="0.400"/><ellipse cx="639.1" cy="501.9" rx="3.6" ry="2.2" fill="#8a8a8a" opacity="0.400"/><ellipse cx="636.8" cy="497.1" rx="2.8" ry="2.2" fill="#8a8a8a" opacity="0.400"/><ellipse cx="661.3" cy="497.1" rx="10.8" ry="10.2" fill="url(#cg)"/><ellipse cx="661.2" cy="497.0" rx="3.7" ry="2.3" fill="#8a8a8a" opacity="0.400"/><ellipse cx="657.4" cy="499.7" rx="3.0" ry="2.3" fill="#8a8a8a" opacity="0.400"/><ellipse cx="661.2" cy="496.7" rx="2.9" ry="2.2" fill="#8a8a8a" opacity="0.400"/><ellipse cx="666.6" cy="495.7" rx="2.4" ry="2.3" fill="#8a8a8a" opacity="0.400"/><ellipse cx="684.8" cy="498.7" rx="9.7" ry="8.8" fill="url(#cg)"/><ellipse cx="686.5" cy="500.2" rx="3.1" ry="2.5" fill="#8a8a8a" opacity="0.400"/><ellipse cx="683.2" cy="499.0" rx="2.1" ry="2.1" fill="#8a8a8a" opacity="0.400"/><ellipse cx="685.5" cy="498.5" rx="3.0" ry="1.3" fill="#8a8a8a" opacity="0.400"/><ellipse cx="685.3" cy="499.8" rx="2.9" ry="1.7" fill="#8a8a8a" opacity="0.400"/><rect x="537.6" y="388.8" width="157.9" height="124.2" fill="none" stroke="#d83c3c" stroke-width="1.200"/></svg>
<svg class="abs" style="left:721px;top:389px" width="14" height="125" viewBox="721 389 14 125"><rect x="723.65" y="391.45" width="8.70" height="119.40" fill="#e8e8e8" stroke="#d9d9d9" stroke-width="0.9"/></svg>
<svg class="abs" style="left:718.700px;top:441.800px" width="17" height="10" viewBox="0 0 17 10"><path d="M16.500 0.400 V9.600 H5 L0.500 5 L5 0.400 Z" fill="#0a78d6"/></svg>
<svg class="abs" style="left:519px;top:521px" width="48" height="28" viewBox="519 521 48 28"><rect x="521.90" y="523.80" width="41.70" height="21.90" fill="#e1e1e1" stroke="#adadad" stroke-width="1"/></svg>
<div class="t" style="left:521.4px;width:42.7px;top:528.5px;text-align:center;font-size:10.4px;letter-spacing:0.325px">Apply</div>
<svg class="abs" style="left:573px;top:521px" width="30" height="28" viewBox="573 521 30 28"><rect x="575.50" y="523.80" width="24.80" height="21.90" fill="#e1e1e1" stroke="#adadad" stroke-width="1"/></svg>
<div class="t" style="left:575px;width:25.8px;top:528.5px;text-align:center;font-size:10.4px;letter-spacing:-0.123px">Fit</div>
<svg class="abs" style="left:609px;top:521px" width="57" height="28" viewBox="609 521 57 28"><rect x="611.90" y="523.80" width="51.60" height="21.90" fill="#e1e1e1" stroke="#adadad" stroke-width="1"/></svg>
<div class="t" style="left:611.4px;width:52.6px;top:528.5px;text-align:center;font-size:10.4px;letter-spacing:0.640px">Normal</div>
<div class="t" style="left:694px;top:528.500px;font-size:10.200px;letter-spacing:-0.036px">100.00%</div>
<div class="abs" style="left:1px;top:561.500px;width:738px;height:16.500px;background:#f0f0f0;"></div>
<div class="t" style="left:2.700px;top:563px;font-size:10.300px;letter-spacing:0.093px">coins: cost 0.008s</div>
<div id="win"></div>
</body></html>
